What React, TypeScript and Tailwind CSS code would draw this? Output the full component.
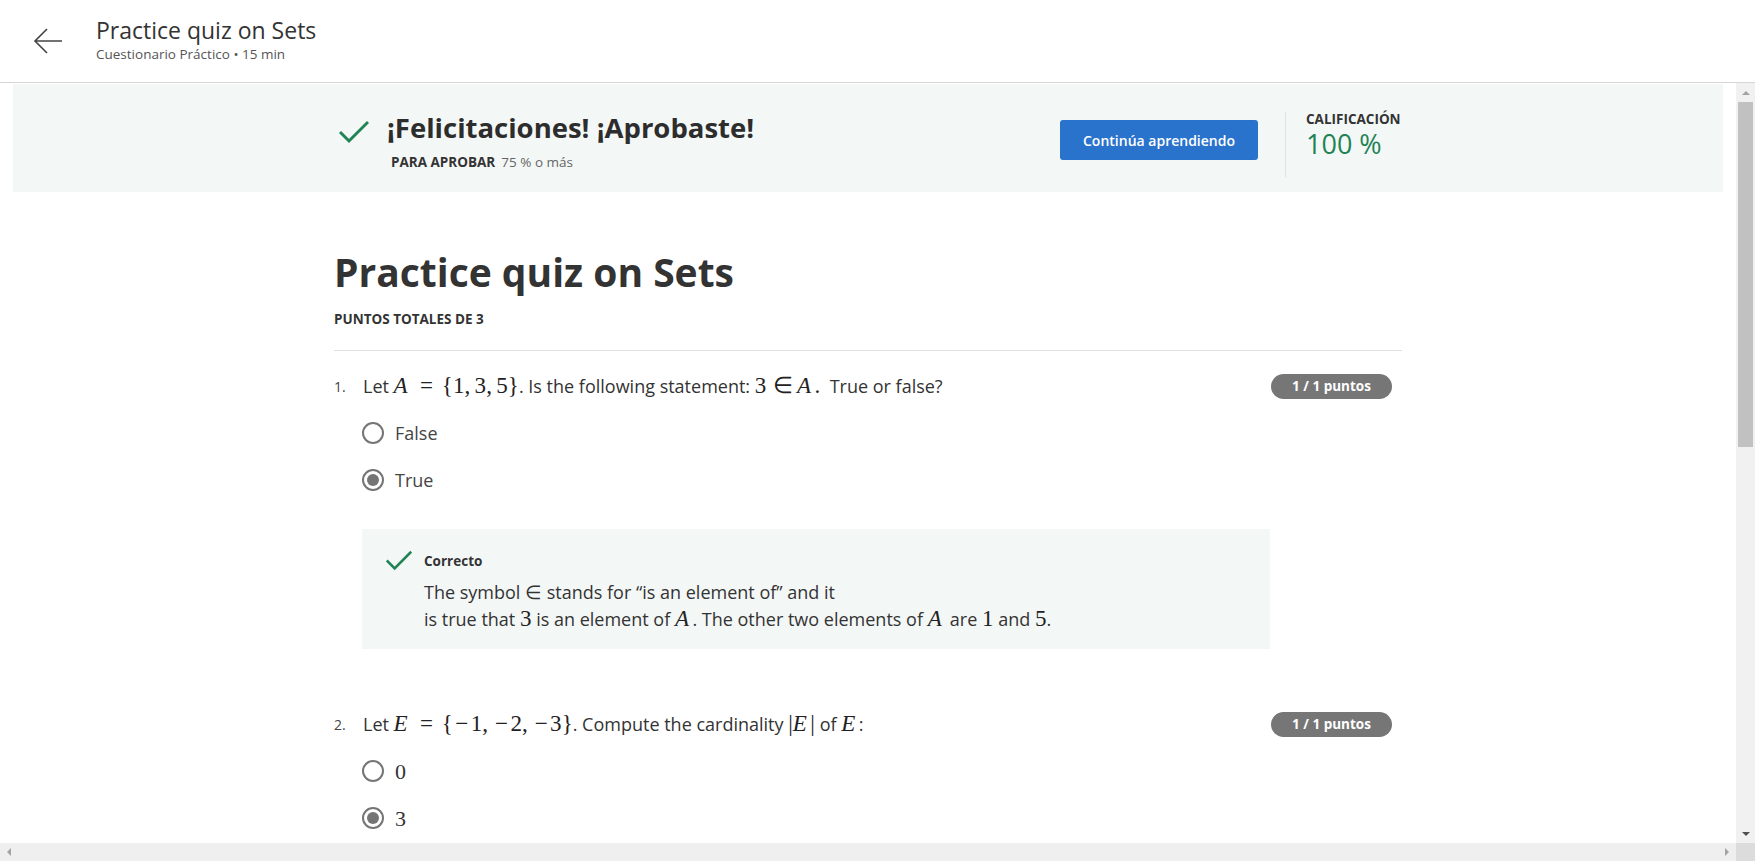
import React from "react";

function Check({ className }: { className?: string }) {
  return (
    <svg viewBox="0 0 30 24" className={className} fill="none">
      <path d="M2 13 L10 21 L28 3" stroke="#1f8354" strokeWidth="3" strokeLinecap="square" />
    </svg>
  );
}

// inline math, KaTeX-like sizing
function M({ children }: { children: React.ReactNode }) {
  return <span className="font-['Liberation_Serif',serif] text-[1.28em] leading-none text-[#222]">{children}</span>;
}

// italic variable padded to Computer Modern width
function V({ c }: { c: string }) {
  return <i className="inline-block w-[0.76em]">{c}</i>;
}

// relation / operator glyph padded to Computer Modern widths
function Op({ c, rel }: { c: string; rel?: boolean }) {
  return (
    <span className={rel ? "inline-block w-[0.778em] mx-[0.2778em] text-center" : "inline-block w-[0.778em] text-center"}>{c}</span>
  );
}

function Comma() {
  return <span className="inline-block w-[0.278em] mr-[0.1667em]">,</span>;
}

function Radio({ checked }: { checked?: boolean }) {
  return (
    <span className="w-[22px] h-[22px] rounded-full border-2 border-[#757575] bg-white flex items-center justify-center shrink-0">
      {checked && <span className="w-[12px] h-[12px] rounded-full bg-[#757575]" />}
    </span>
  );
}

function Option({ label, checked, math }: { label: string; checked?: boolean; math?: boolean }) {
  return (
    <div className="flex items-center gap-[11px] h-[26px] pl-[28px]">
      <Radio checked={checked} />
      <span className={math ? "font-['Liberation_Serif',serif] text-[22px] text-[#333]" : "text-[18px] text-[#444]"}>{label}</span>
    </div>
  );
}

function Question({ n, children }: { n: string; children: React.ReactNode }) {
  return (
    <div className="flex items-center h-[26px]">
      <span className="w-[29px] text-[14px] text-[#444]">{n}</span>
      <div className="flex-1 text-[18px] text-[#333] whitespace-nowrap">{children}</div>
      <span className="w-[121px] h-[25px] rounded-full bg-[#767676] text-white text-[13.5px] font-bold flex items-center justify-center mr-[10px]">
        1 / 1 puntos
      </span>
    </div>
  );
}

export default function App() {
  return (
    <div className="w-[1755px] h-[861px] overflow-hidden flex flex-col bg-white font-['Open_Sans',sans-serif] text-[#333]">
      {/* header */}
      <div className="h-[83px] border-b border-[#d6d6d6] flex items-center shrink-0">
        <svg viewBox="0 0 30 28" className="w-[30px] h-[28px] ml-[33px]" fill="none">
          <path d="M29 14 H2 M14 2 L2 14 L14 26" stroke="#444" strokeWidth="1.6" />
        </svg>
        <div className="ml-[33px] flex flex-col mt-[-3px]">
          <span className="text-[23px] leading-[30px] text-[#333]">Practice quiz on Sets</span>
          <span className="text-[13.5px] leading-[19px] text-[#555]">Cuestionario Práctico • 15 min</span>
        </div>
      </div>

      <div className="flex flex-1 min-h-0">
        <div className="flex-1 flex flex-col overflow-hidden">
          {/* result banner */}
          <div className="mt-px mx-[13px] h-[108px] bg-[#f3f8f7] shrink-0">
            <div className="w-[1068px] mx-auto flex items-start">
              <Check className="w-[30px] h-[24px] ml-[5px] mt-[36px]" />
              <div className="ml-[18px] mt-[26px] flex-1">
                <div className="text-[27.5px] leading-[36px] font-bold text-[#2d2d2d]">¡Felicitaciones! ¡Aprobaste!</div>
                <div className="mt-[6px] ml-[4px] text-[13.5px] leading-[20px]">
                  <span className="font-bold text-[#333]">PARA APROBAR</span>
                  <span className="ml-[6px] text-[#666]">75 % o más</span>
                </div>
              </div>
              <button className="mt-[36px] w-[198px] h-[40px] rounded-[3px] bg-[#2a73cc] text-white text-[14px] font-semibold">
                Continúa aprendiendo
              </button>
              <div className="mt-[28px] ml-[27px] w-px h-[65px] bg-[#dde3e1]" />
              <div className="ml-[20px] mt-[26px] w-[96px]">
                <div className="text-[13.5px] leading-[18px] font-bold text-[#333]">CALIFICACIÓN</div>
                <div className="text-[27px] leading-[32px] text-[#1f8354]">100 %</div>
              </div>
            </div>
          </div>

          {/* quiz */}
          <div className="w-[1068px] mx-auto flex flex-col">
            <h1 className="mt-[56px] text-[39px] leading-[48px] font-bold text-[#333]">Practice quiz on Sets</h1>
            <div className="mt-[14px] text-[13.5px] leading-[18px] font-bold text-[#333]">PUNTOS TOTALES DE 3</div>
            <div className="mt-[22px] border-t border-[#e1e1e1]" />

            <div className="mt-[22px]">
              <Question n="1.">
                Let{" "}
                <M>
                  <V c="A" />
                  <Op c="=" rel />
                  {"{"}1<Comma />3<Comma />5{"}"}
                </M>
                . Is the following statement:{" "}
                <M>
                  3<Op c="∈" rel />
                  <V c="A" />.
                </M>
                &nbsp; True or false?
              </Question>
            </div>
            <div className="mt-[21px] flex flex-col gap-[21px]">
              <Option label="False" />
              <Option label="True" checked />
            </div>

            <div className="mt-[36px] ml-[28px] w-[908px] bg-[#f3f8f7] pt-[23px] pb-[17px] pl-[24px] flex items-start">
              <Check className="w-[26px] h-[21px] mt-[-2px]" />
              <div className="ml-[12px] flex flex-col">
                <div className="text-[13.5px] leading-[18px] font-bold text-[#333]">Correcto</div>
                <div className="mt-[9px] text-[18px] leading-[26px] text-[#333]">
                  The symbol <span className="font-['Liberation_Serif',serif] text-[1.05em]">∈</span> stands for “is an element of” and it
                  <br />
                  is true that <M>3</M> is an element of <M><V c="A" /></M>. The other two elements of <M><V c="A" /></M> are <M>1</M> and <M>5</M>.
                </div>
              </div>
            </div>

            <div className="mt-[62px]">
              <Question n="2.">
                Let{" "}
                <M>
                  <V c="E" />
                  <Op c="=" rel />
                  {"{"}
                  <Op c="−" />1<Comma />
                  <Op c="−" />2<Comma />
                  <Op c="−" />3{"}"}
                </M>
                . Compute the cardinality{" "}
                <M>
                  |<V c="E" />|
                </M>{" "}
                of{" "}
                <M>
                  <V c="E" />
                </M>
                :
              </Question>
            </div>
            <div className="mt-[21px] flex flex-col gap-[21px]">
              <Option label="0" math />
              <Option label="3" math checked />
            </div>
          </div>
        </div>

        {/* vertical scrollbar */}
        <div className="w-[19px] bg-[#f1f1f1] flex flex-col items-center shrink-0">
          <div className="h-[19px] flex items-center justify-center">
            <span className="w-0 h-0 border-x-[4px] border-x-transparent border-b-[4px] border-b-[#a3a3a3]" />
          </div>
          <div className="w-[15px] h-[345px] bg-[#c1c1c1]" />
          <div className="flex-1" />
          <div className="h-[19px] flex items-center justify-center">
            <span className="w-0 h-0 border-x-[4px] border-x-transparent border-t-[4px] border-t-[#505050]" />
          </div>
        </div>
      </div>

      {/* horizontal scrollbar */}
      <div className="h-[18px] flex shrink-0">
        <div className="flex-1 bg-[#efefef] flex items-center justify-between px-[7px]">
          <span className="w-0 h-0 border-y-[4px] border-y-transparent border-r-[4px] border-r-[#a3a3a3]" />
          <span className="w-0 h-0 border-y-[4px] border-y-transparent border-l-[4px] border-l-[#a3a3a3]" />
        </div>
        <div className="w-[19px] bg-[#dcdcdc]" />
      </div>
    </div>
  );
}
